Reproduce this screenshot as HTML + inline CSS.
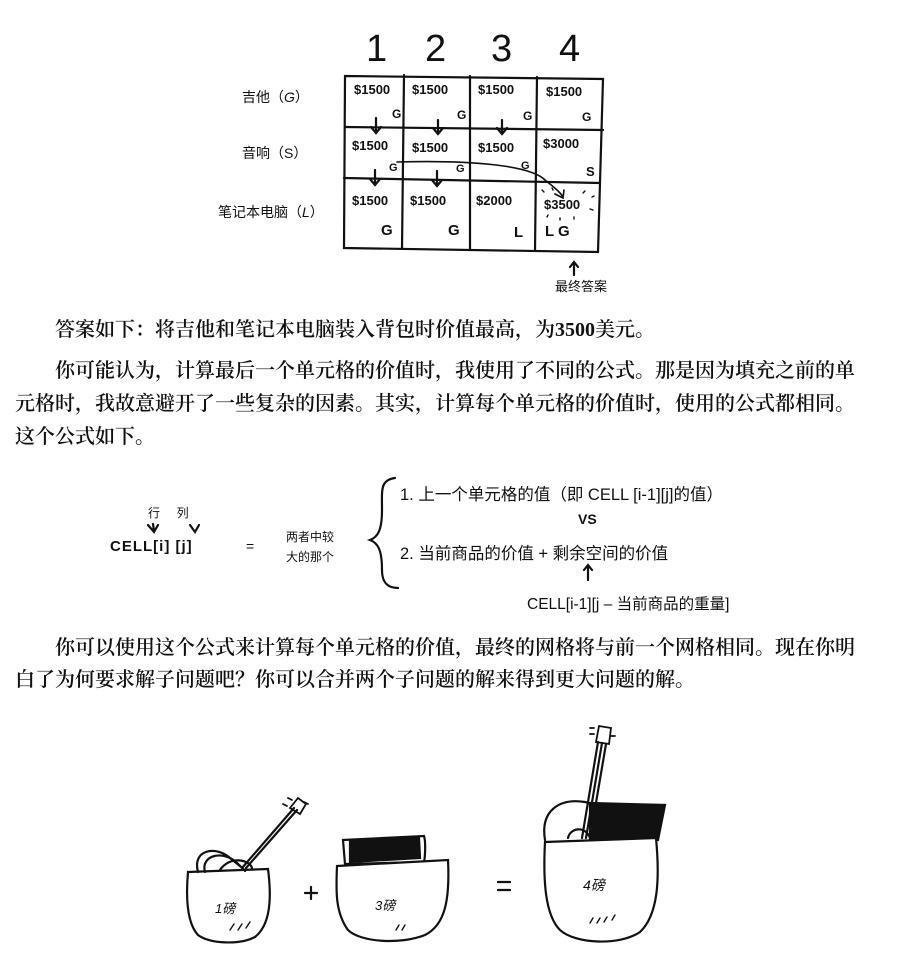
<!DOCTYPE html>
<html><head><meta charset="utf-8"><style>
body{margin:0;width:911px;height:961px;background:#fff;position:relative;overflow:hidden;font-family:"Liberation Serif","Noto Serif CJK SC",serif;color:#111}
.t{position:absolute;font-size:20px;line-height:33px;white-space:nowrap;font-weight:600}
.h{position:absolute;font-family:"Liberation Sans","Noto Sans CJK SC",sans-serif;white-space:nowrap;color:#111}
svg{position:absolute;left:0;top:0}
</style></head><body>
<svg width="911" height="961" viewBox="0 0 911 961" fill="none" stroke="#111" stroke-width="2.2" stroke-linecap="round">
<path d="M345 76 L603 79 L598 252 L344 248 Z"/>
<path d="M404 75 L402 249 M470 76 L470 250 M537 77 L535 251"/>
<path d="M345 127 L603 130 M344 178 L600 183"/>
<path d="M376 118 v14 m-5 -5 l5 6 l5 -6 M438 120 v13 m-5 -5 l5 6 l5 -6 M502 120 v13 m-5 -5 l5 6 l5 -6 M375 170 v14 m-5 -5 l5 6 l5 -6 M437 171 v14 m-5 -5 l5 6 l5 -6"/>
<path d="M397 162 C470 160 530 165 545 180 C555 188 560 192 563 197 m-8 -3 l8 4 l1 -8" stroke-width="1.6"/>
<path d="M542 190 l2 2 M552 188 l1 2 M585 191 l-2 2 M594 196 l-2 1 M590 209 l3 1 M548 215 l-1 2 M560 218 v2 M574 217 v2" stroke-width="1.4"/>
<path d="M574 275 v-12 m-4 4 l4 -5 l4 5"/>
<path d="M395 478 C380 480 382 490 382 510 C382 530 378 537 370 540 C378 543 382 550 382 570 C382 585 390 588 398 588"/>
<path d="M148 525 l6 7 l4 -7 M154 531 l-1 -7 M190 525 l5 7 l4 -7"/>
<path d="M588 580 v-14 m-4 4 l4 -5 l4 5"/>
<path d="M188 872 L268 869 C272 900 270 925 255 937 C240 945 210 944 198 935 C186 922 186 895 188 872 Z"/>
<path d="M198 872 C192 850 215 845 230 858 C240 866 245 870 245 871 M205 872 C200 855 225 848 240 866 M220 870 C230 855 250 860 252 868"/>
<path d="M242 868 L294 808 M246 868 L297 810"/>
<path d="M290 808 l8 -10 l8 6 l-6 10 z M287 806 l-4 -2 M292 800 l-4 -2 M304 802 l4 2" stroke-width="1.8"/>
<path d="M230 930 l4 -6 M238 930 l4 -6 M246 928 l4 -6" stroke-width="1.4"/>
<path d="M305 893 h12 M311 887 v12"/>
<path d="M343 840 L424 836 C426 842 425 858 424 862 L345 864 Z"/>
<path d="M350 840 L419 838 L420 858 L350 862 Z" fill="#111"/>
<path d="M337 866 L448 860 C450 900 445 925 425 935 C400 945 360 942 348 930 C335 912 336 890 337 866 Z" fill="#fff"/>
<path d="M396 930 l3 -5 M402 930 l3 -5" stroke-width="1.4"/>
<path d="M498 882 h12 M498 890 h12"/>
<path d="M590 803 L665 805 L658 840 L590 840 Z" fill="#111"/>
<path d="M545 840 C540 810 560 798 585 802 C600 805 615 820 622 838"/>
<path d="M582 838 L598 742 M586 838 L602 743 M590 838 L606 744"/>
<path d="M596 742 l3 -16 l12 2 l-2 16 z M594 734 l-4 0 M594 728 l-4 0 M611 736 l4 0" stroke-width="1.8"/>
<path d="M568 838 C570 828 585 825 590 838"/>
<path d="M545 842 L656 838 C660 880 658 915 640 932 C620 946 575 944 560 930 C545 915 543 880 545 842 Z" fill="#fff"/>
<path d="M590 923 l3 -5 M597 923 l3 -5 M604 922 l3 -5 M612 920 l3 -5" stroke-width="1.4"/>
</svg>
<div class="h" style="left:366px;top:28px;font-size:38px">1</div>
<div class="h" style="left:425px;top:28px;font-size:38px">2</div>
<div class="h" style="left:491px;top:28px;font-size:38px">3</div>
<div class="h" style="left:559px;top:28px;font-size:38px">4</div>
<div class="h" style="left:242px;top:87px;font-size:14px">吉他（<i>G</i>）</div>
<div class="h" style="left:242px;top:143px;font-size:14px">音响（S）</div>
<div class="h" style="left:218px;top:202px;font-size:14px">笔记本电脑（<i>L</i>）</div>
<div class="h" style="font-size:13px;font-weight:bold;left:354px;top:82px">$1500</div>
<div class="h" style="font-size:13px;font-weight:bold;left:412px;top:82px">$1500</div>
<div class="h" style="font-size:13px;font-weight:bold;left:478px;top:82px">$1500</div>
<div class="h" style="font-size:13px;font-weight:bold;left:546px;top:84px">$1500</div>
<div class="h" style="font-size:12px;font-weight:bold;left:392px;top:107px">G</div>
<div class="h" style="font-size:12px;font-weight:bold;left:457px;top:108px">G</div>
<div class="h" style="font-size:12px;font-weight:bold;left:523px;top:109px">G</div>
<div class="h" style="font-size:12px;font-weight:bold;left:582px;top:110px">G</div>
<div class="h" style="font-size:13px;font-weight:bold;left:352px;top:138px">$1500</div>
<div class="h" style="font-size:13px;font-weight:bold;left:412px;top:140px">$1500</div>
<div class="h" style="font-size:13px;font-weight:bold;left:478px;top:140px">$1500</div>
<div class="h" style="font-size:13px;font-weight:bold;left:543px;top:136px">$3000</div>
<div class="h" style="font-size:11px;font-weight:bold;left:389px;top:162px">G</div>
<div class="h" style="font-size:11px;font-weight:bold;left:456px;top:163px">G</div>
<div class="h" style="font-size:11px;font-weight:bold;left:521px;top:160px">G</div>
<div class="h" style="font-size:13px;font-weight:bold;left:586px;top:164px">S</div>
<div class="h" style="font-size:13px;font-weight:bold;left:352px;top:193px">$1500</div>
<div class="h" style="font-size:13px;font-weight:bold;left:410px;top:193px">$1500</div>
<div class="h" style="font-size:13px;font-weight:bold;left:476px;top:193px">$2000</div>
<div class="h" style="font-size:13px;font-weight:bold;left:544px;top:197px">$3500</div>
<div class="h" style="font-size:15px;font-weight:bold;left:381px;top:222px">G</div>
<div class="h" style="font-size:15px;font-weight:bold;left:448px;top:222px">G</div>
<div class="h" style="font-size:15px;font-weight:bold;left:514px;top:224px">L</div>
<div class="h" style="font-size:15px;font-weight:bold;left:545px;top:223px">L G</div>
<div class="h" style="font-size:13px;left:555px;top:276px">最终答案</div>

<div class="t" style="left:55px;top:314px">答案如下：将吉他和笔记本电脑装入背包时价值最高，为3500美元。</div>
<div class="t" style="left:55px;top:355px">你可能认为，计算最后一个单元格的价值时，我使用了不同的公式。那是因为填充之前的单</div>
<div class="t" style="left:15px;top:388px">元格时，我故意避开了一些复杂的因素。其实，计算每个单元格的价值时，使用的公式都相同。</div>
<div class="t" style="left:15px;top:421px">这个公式如下。</div>

<div class="h" style="font-size:12px;left:148px;top:504px">行&nbsp;&nbsp;&nbsp;&nbsp;&nbsp;列</div>
<div class="h" style="font-size:15px;font-weight:bold;left:110px;top:538px;letter-spacing:1px">CELL[i] [j]</div>
<div class="h" style="font-size:14px;left:246px;top:538px">=</div>
<div class="h" style="font-size:12px;left:286px;top:527px;line-height:20px">两者中较<br>大的那个</div>
<div class="h" style="font-size:16.5px;left:400px;top:481px">1. 上一个单元格的值（即 CELL [i-1][j]的值）</div>
<div class="h" style="font-size:14px;font-weight:bold;left:578px;top:511px">VS</div>
<div class="h" style="font-size:16.5px;left:400px;top:540px">2. 当前商品的价值 + 剩余空间的价值</div>
<div class="h" style="font-size:15.5px;left:527px;top:592px">CELL[i-1][j – 当前商品的重量]</div>

<div class="t" style="left:55px;top:632px">你可以使用这个公式来计算每个单元格的价值，最终的网格将与前一个网格相同。现在你明</div>
<div class="t" style="left:15px;top:664px">白了为何要求解子问题吧？你可以合并两个子问题的解来得到更大问题的解。</div>

<div class="h" style="font-size:13px;left:215px;top:898px;font-style:italic">1磅</div>
<div class="h" style="font-size:13px;left:375px;top:895px;font-style:italic">3磅</div>
<div class="h" style="font-size:14px;left:583px;top:875px;font-style:italic">4磅</div>
</body></html>
